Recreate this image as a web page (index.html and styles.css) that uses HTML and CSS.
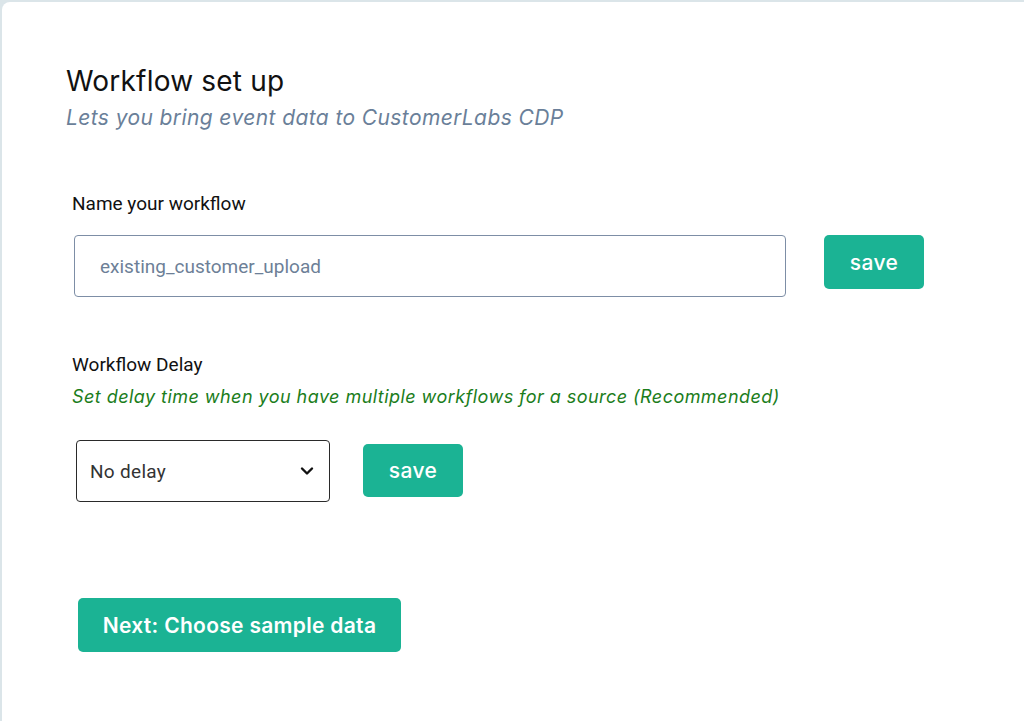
FILE: index.html
```html
<!DOCTYPE html>
<html>
<head>
<meta charset="utf-8">
<link rel="stylesheet" href="styles.css">
</head>
<body>
<div class="card">
  <h1 class="title">Workflow set up</h1>
  <p class="subtitle">Lets you bring event data to CustomerLabs CDP</p>

  <div class="field name-field">
    <label class="label">Name your workflow</label>
    <div class="row">
      <div class="text-input">existing_customer_upload</div>
      <button class="btn btn-save">save</button>
    </div>
  </div>

  <div class="field delay-field">
    <label class="label">Workflow Delay</label>
    <p class="hint">Set delay time when you have multiple workflows for a source (Recommended)</p>
    <div class="row row-delay">
      <div class="select">
        <span>No delay</span>
        <svg class="chev" width="14" height="10" viewBox="0 0 14 10"><path d="M2 2.5 L7 7.5 L12 2.5" fill="none" stroke="#111" stroke-width="2.4" stroke-linecap="round" stroke-linejoin="round"/></svg>
      </div>
      <button class="btn btn-save2">save</button>
    </div>
  </div>

  <button class="btn btn-next">Next: Choose sample data</button>
</div>
</body>
</html>
```
FILE: styles.css
```css
html, body {
  margin: 0;
  padding: 0;
  height: 100%;
  background: #dbe5e9;
}
body {
  overflow: hidden;
}
.card {
  margin: 2px 0 0 2px;
  background: #ffffff;
  border-top-left-radius: 8px;
  height: 740px;
  padding: 61px 0 0 64px;
  box-sizing: border-box;
  font-family: Inter, "Open Sans", sans-serif;
}
.title {
  margin: 0;
  font-family: Inter, sans-serif;
  font-weight: 400;
  font-size: 28px;
  line-height: 36px;
  color: #111;
  letter-spacing: 0.2px;
}
.subtitle {
  margin: 4px 0 0 0;
  font-family: Inter, sans-serif;
  font-style: italic;
  font-size: 21px;
  line-height: 30px;
  color: #6a7f99;
  letter-spacing: 0.4px;
}
.field {
  padding-left: 6px;
}
.name-field {
  margin-top: 59px;
}
.label {
  display: block;
  font-family: Roboto, sans-serif;
  font-size: 19px;
  line-height: 24px;
  color: #111;
}
.row {
  display: flex;
  align-items: flex-start;
  margin-top: 19px;
}
.text-input {
  width: 712px;
  height: 62px;
  box-sizing: border-box;
  border: 1px solid #7d8ea6;
  border-radius: 4px;
  padding-left: 25px;
  display: flex;
  align-items: center;
  font-family: Roboto, sans-serif;
  font-size: 19px;
  color: #6d7f97;
  margin-left: 2px;
}
.btn {
  border: none;
  background: #1bb394;
  color: #fff;
  font-family: Inter, sans-serif;
  border-radius: 5px;
  cursor: pointer;
  padding: 0;
}
.btn-save {
  width: 100px;
  height: 54px;
  margin-left: 38px;
  margin-top: 0;
  font-size: 21px;
  font-weight: 500;
  letter-spacing: 0.4px;
}
.delay-field {
  margin-top: 56px;
}
.hint {
  margin: 8px 0 0 0;
  font-family: Inter, sans-serif;
  font-style: italic;
  font-size: 18px;
  line-height: 24px;
  color: #1b7d1b;
  letter-spacing: 0.45px;
}
.row-delay {
  margin-top: 31px;
}
.select {
  width: 254px;
  height: 62px;
  box-sizing: border-box;
  border: 1px solid #2a2a2a;
  border-radius: 4px;
  margin-left: 4px;
  padding: 0 15px 0 13px;
  display: flex;
  align-items: center;
  justify-content: space-between;
  font-family: Roboto, sans-serif;
  font-size: 19px;
  letter-spacing: 0.3px;
  color: #333;
}
.btn-save2 {
  width: 100px;
  height: 53px;
  margin-left: 33px;
  margin-top: 4px;
  font-size: 21px;
  font-weight: 500;
  letter-spacing: 0.4px;
}
.btn-next {
  display: block;
  margin: 96px 0 0 12px;
  width: 323px;
  height: 54px;
  font-size: 21px;
  font-weight: 600;
  letter-spacing: 0.3px;
}
```
